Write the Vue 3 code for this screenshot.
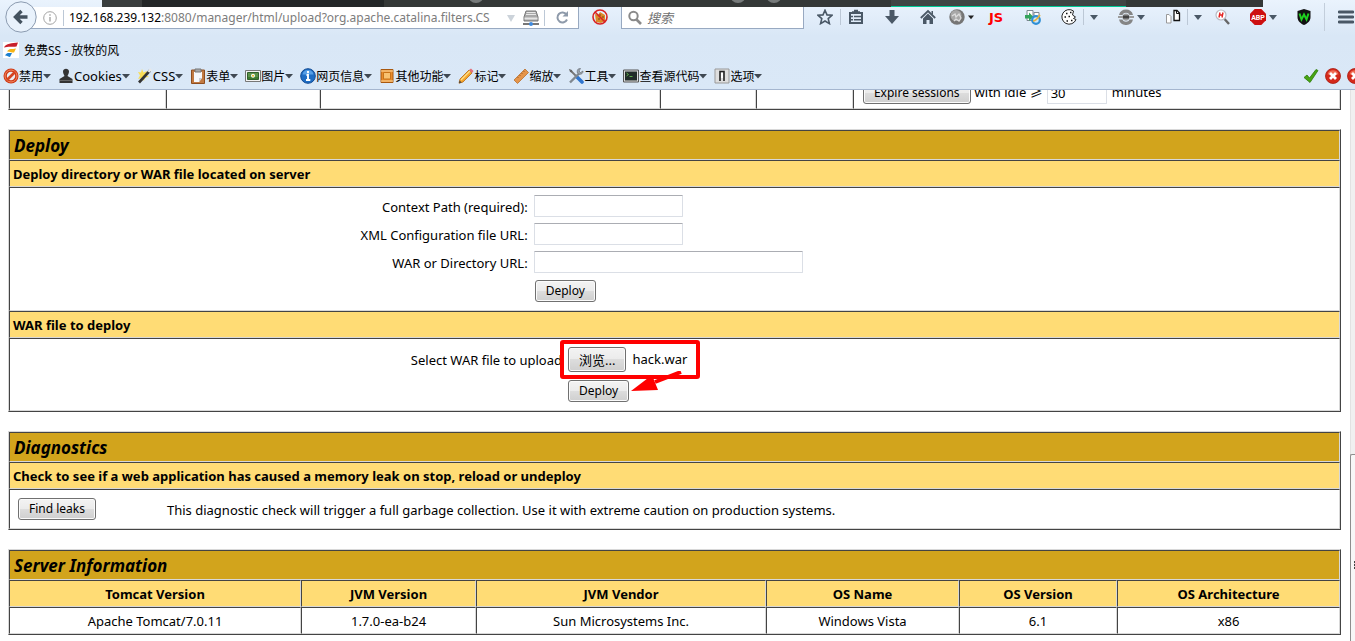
<script setup>
import { ref } from 'vue'

const contextPath = ref('')
const configUrl = ref('')
const warUrl = ref('')
const idle = ref('30')
const query = ref('')

const menus = [
  { icon: 'ban', label: '禁用' },
  { icon: 'person', label: 'Cookies', latin: true },
  { icon: 'wand', label: 'CSS', latin: true },
  { icon: 'clipboard', label: '表单' },
  { icon: 'image', label: '图片' },
  { icon: 'info', label: '网页信息' },
  { icon: 'book', label: '其他功能' },
  { icon: 'pencil', label: '标记' },
  { icon: 'ruler', label: '缩放' },
  { icon: 'tools', label: '工具' },
  { icon: 'screen', label: '查看源代码' },
  { icon: 'switch', label: '选项' },
]

const server = [
  ['Tomcat Version', 'Apache Tomcat/7.0.11'],
  ['JVM Version', '1.7.0-ea-b24'],
  ['JVM Vendor', 'Sun Microsystems Inc.'],
  ['OS Name', 'Windows Vista'],
  ['OS Version', '6.1'],
  ['OS Architecture', 'x86'],
]
</script>

<template>
  <div class="window">
    <header class="chrome">
      <div class="strip" aria-hidden="true">
        <span class="strip-edge"></span>
        <span class="strip-dots"><i></i><i></i><i></i></span>
        <span class="strip-tab"></span>
        <span class="strip-end"></span>
      </div>

      <div class="nav">
        <button class="back" type="button" aria-label="Back">
          <svg viewBox="0 0 32 32"><circle cx="16" cy="16" r="15.2" fill="#e9f2fc" stroke="#8b9bb0" /><path d="M22.500 16H11M16.500 10l-6 6 6 6" fill="none" stroke="#44525f" stroke-width="3.400" /></svg>
        </button>
        <div class="url">
          <svg class="ic" viewBox="0 0 16 16"><circle cx="8" cy="8" r="6.300" fill="none" stroke="#a3a3a3" /><path d="M8 7v4.500M8 4.200v1.500" stroke="#a3a3a3" stroke-width="1.400" /></svg>
          <span class="rule"></span>
          <span class="address"><b>192.168.239.132</b>:8080/manager/html/upload?org.apache.catalina.filters.CS</span>
          <svg class="caret" viewBox="0 0 8 8"><path d="M0 1h8L4 8z" fill="#ccd3da" /></svg>
          <svg class="ic" viewBox="0 0 16 16"><path d="M3 1h10l2 6v4H1V7z" fill="#a8a8a8" stroke="#777" /><path d="M3.500 2.500h9M3 4.500h10" stroke="#e8e8e8" /><path d="M1.500 7.500h13v2h-13z" fill="#e5e5e5" /><path d="M0 14h16" stroke="#777" stroke-width="2" /><circle cx="8" cy="14" r="2" fill="#3f8be0" /></svg>
          <span class="rule"></span>
          <svg class="ic reload" viewBox="0 0 16 16"><path d="M12.500 4.500A5 5 0 1 0 13 9.500" fill="none" stroke="#8e9aaa" stroke-width="2" /><path d="M8.500 6.500H14V1z" fill="#8e9aaa" /></svg>
        </div>
        <button class="tool fox" type="button" aria-label="Block">
          <svg viewBox="0 0 16 16"><path d="M3 5l3 1 2-3 5 3v6l-4 2-5-1z" fill="#dc8a28" /><path d="M7 6h2M10 8h2M6 10h2" stroke="#7a4516" /><circle cx="8" cy="8" r="7" fill="none" stroke="#d92323" stroke-width="1.600" /><path d="M3 3l10 10" stroke="#d92323" stroke-width="1.600" /></svg>
        </button>
        <label class="search">
          <svg class="ic" viewBox="0 0 16 16"><circle cx="6.500" cy="6" r="4.200" fill="none" stroke="#8a8a8a" stroke-width="2" /><path d="M9.500 9.500l4.500 4.500" stroke="#8a8a8a" stroke-width="2.600" /></svg>
          <input v-model="query" placeholder="搜索" aria-label="搜索" />
        </label>

        <div class="tools">
          <button class="tool" type="button" aria-label="Bookmark"><svg viewBox="0 0 16 16"><path d="M8 1.300l2 4.600 5 .4-3.800 3.300 1.200 5L8 12l-4.400 2.600 1.200-5L1 6.300l5-.4z" fill="none" stroke="#4a5866" stroke-width="1.600" /></svg></button>
          <span class="rule loose"></span>
          <button class="tool" type="button" aria-label="Library"><svg viewBox="0 0 16 16"><path d="M2 4h12v10H2z" fill="none" stroke="#4a5866" stroke-width="2" /><path d="M4 3h8M6 1.500h4M3 7.500h10M3 10.800h10" stroke="#4a5866" stroke-width="1.600" /><path d="M5.500 5v8" stroke="#dce8f5" /></svg></button>
          <button class="tool far" type="button" aria-label="Downloads"><svg viewBox="0 0 16 16"><path d="M5.500 1h5v6H15l-7 8-7-8h4.500z" fill="#4a5866" /></svg></button>
          <button class="tool far" type="button" aria-label="Home"><svg viewBox="0 0 16 16"><path d="M.8 9L8 2l7.200 7" fill="none" stroke="#4a5866" stroke-width="1.800" /><path d="M3 9.500l5-5 5 5V15H9.500v-4h-3v4H3zM11.500 2H13v4l-1.500-1.500z" fill="#4a5866" /></svg></button>
          <button class="tool mid" type="button" aria-label="Proxy"><svg viewBox="0 0 16 16"><circle cx="8" cy="8" r="7.700" fill="#757575" /><circle cx="7" cy="6.500" r="5.500" fill="#a8a8a8" /><path d="M3 7l3-2 1 3 3-3 2 4-2 3-3-2-2 2" fill="none" stroke="#ddd" stroke-width="1.300" /></svg></button>
          <svg class="caret near tiny" viewBox="0 0 8 8"><path d="M0 2h8L4 7z" fill="#222" /></svg>
          <button class="js mid" type="button">JS</button>
          <button class="tool far" type="button" aria-label="Switch browser"><svg viewBox="0 0 16 16"><path d="M2 1.500h6v10H2zM9 3.500h5v9H9z" fill="#fff" stroke="#7d8791" /><path d="M0 6h4V3.500L8.500 8 4 12V9.500H0z" fill="#34a35b" /><circle cx="11" cy="11" r="3.800" fill="#cfe6f8" stroke="#2f8fd5" stroke-width="2.200" /><path d="M8 12c2 0 5-3 7-6" stroke="#e7b13a" stroke-width="1.600" fill="none" /></svg></button>
          <button class="tool far" type="button" aria-label="Cookies"><svg viewBox="0 0 16 16"><path d="M12.500 2A7.300 7.300 0 1 0 15 10.500l-2.500-1 2-1.500-3-2z" fill="#fff" stroke="#222" /><path d="M5 4.500h1.500M9 3.500h1.500M3.500 8h1.500M7.500 7.500H9M5.500 12H7M10 11.500h1.500" stroke="#111" stroke-width="1.500" /></svg></button>
          <span class="rule"></span>
          <svg class="caret" viewBox="0 0 8 8"><path d="M0 2h8L4 7z" fill="#4a5866" /></svg>
          <button class="tool far" type="button" aria-label="Session"><svg viewBox="0 0 16 16"><path d="M1 6a7.200 7.200 0 0 1 14 0h-3.500c-1-3-6-3-7 0zM1 10.500a7.200 7.200 0 0 0 14 0h-3.500c-1 3-6 3-7 0z" fill="#858585" /><path d="M0 7h4.500c1-3.500 6-3.500 7 0H16v2h-4.500c-1 3.500-6 3.500-7 0H0z" fill="#9c9c9c" /><path d="M5 8h6" stroke="#444" stroke-width="3" /></svg></button>
          <svg class="caret near" viewBox="0 0 8 8"><path d="M0 2h8L4 7z" fill="#4a5866" /></svg>
          <button class="tool far" type="button" aria-label="Tiles"><svg viewBox="0 0 16 16"><path d="M1.500 5.500h2.500l2 2v6.500H1.500z" fill="#fff" stroke="#999" /><path d="M9 1.500h3L14.500 4v7.500H9z" fill="#fff" stroke="#111" stroke-width="1.300" /><path d="M11.500 1.500v3h3" fill="none" stroke="#111" /></svg></button>
          <span class="rule"></span>
          <svg class="caret" viewBox="0 0 8 8"><path d="M0 2h8L4 7z" fill="#4a5866" /></svg>
          <button class="tool mid" type="button" aria-label="Inspect"><svg viewBox="0 0 16 16"><path d="M9.500 10l4.500 5" stroke="#666" stroke-width="2.400" /><circle cx="6" cy="6" r="5" fill="#fff" stroke="#b9b9c2" stroke-width="1.200" /><path d="M5 3.500L4 8.500M8 3.500l-1 5M4.500 6h3" stroke="#e32222" stroke-width="1.400" /></svg></button>
          <button class="tool wide-gap" type="button" aria-label="Adblock"><svg viewBox="0 0 16 16"><path d="M4.700 0h6.600L16 4.700v6.600L11.300 16H4.700L0 11.300V4.700z" fill="#cd1010" /><text x="8" y="10.800" text-anchor="middle" class="abp">ABP</text></svg></button>
          <svg class="caret near" viewBox="0 0 8 8"><path d="M0 2h8L4 7z" fill="#4a5866" /></svg>
          <button class="tool wide-gap" type="button" aria-label="Wappalyzer"><svg viewBox="0 0 16 16"><path d="M8 0l6.500 2v6c0 4-3 6.500-6.500 8-3.500-1.500-6.500-4-6.500-8V2z" fill="#111" /><path d="M3.500 4.500l2 6L8 5.500l2.500 5 2-6" fill="none" stroke="#1fd01f" stroke-width="2" /></svg></button>
          <span class="rule tall"></span>
          <button class="tool" type="button" aria-label="Menu"><svg viewBox="0 0 16 16"><path d="M1 3h14M1 8h14M1 13h14" stroke="#4a5866" stroke-width="2.800" stroke-linecap="round" /></svg></button>
        </div>
      </div>

      <div class="bookmarks">
        <a href="#"><svg class="ic" viewBox="0 0 16 16"><path d="M0 0h16v16H0z" fill="#fff" /><path d="M1 5.500C3 1 9 1.500 15 0.500l-1.500 4C9 5 5 4 1 5.500z" fill="#c8202c" /><path d="M4 9.500C6 6 9 7.500 13 6.500l-2 4C9 11 6 9 4 9.500z" fill="#f5b417" /><path d="M2 13.500C4 10 6 11.500 9 11l-2 4C5.500 15 3.500 13 2 13.500z" fill="#1c7fd0" /></svg>免费SS - 放牧的风</a>
      </div>

      <div class="devbar">
        <button v-for="m in menus" :key="m.label" class="menu" :class="{ latin: m.latin }" type="button">
          <svg class="ic" viewBox="0 0 16 16">
            <g v-if="m.icon === 'ban'"><circle cx="8" cy="8" r="7.500" fill="#cf3a17" /><circle cx="8" cy="8" r="6" fill="none" stroke="#f28a63" /><circle cx="8" cy="8" r="4.200" fill="#e9edf2" /><path d="M4 12l8-8" stroke="#d64420" stroke-width="2.600" /></g>
            <g v-else-if="m.icon === 'person'"><path d="M5 3.500C5-.3 11-.3 11 3.500c0 2-1 3-1.500 4.500L14.500 11v4h-13v-4L6.500 8C6 6.500 5 5.500 5 3.500z" fill="#343434" /><path d="M2 12.500h12" stroke="#666" /></g>
            <g v-else-if="m.icon === 'wand'"><path d="M5 1l1.500 3.500L10 3 8.500 6.500 12 9l-4 .5L7 13 5 10l-4 1 2-3.500L1 4l3 .5z" fill="#f8dd58" /><path d="M2 14.500L13 2.500" stroke="#333" stroke-width="2.600" /><path d="M11.500 4L14 1.200" stroke="#e8e8e8" stroke-width="2.600" /></g>
            <g v-else-if="m.icon === 'clipboard'"><path d="M1.500 2h13v13.500h-13z" fill="#c27a42" stroke="#8e4e20" /><path d="M4 4h8v6l-3 4H4z" fill="#f6f8fb" /><path d="M12 10H9v4z" fill="#c8cdd4" /><path d="M5 1h6v3H5z" fill="#aaa" stroke="#777" /></g>
            <g v-else-if="m.icon === 'image'"><path d="M.5 2.500h15v11H.5z" fill="#f3f3f3" stroke="#777" /><path d="M2.500 4.500h11v7h-11z" fill="#5c9148" stroke="#315f2a" /><path d="M3 9h10v2H3z" fill="#3c7a2c" /><circle cx="8" cy="7.800" r="2" fill="#fff" /><circle cx="8" cy="7.800" r="1" fill="#e8b616" /></g>
            <g v-else-if="m.icon === 'info'"><circle cx="8" cy="8" r="7.300" fill="#1f6dc4" stroke="#124b94" /><path d="M2.500 6.500a5.600 5.600 0 0 1 11 0z" fill="#579fe6" /><path d="M8 3v2.200M6.500 7H8v5M6 12h4.300" stroke="#fff" stroke-width="1.900" fill="none" /></g>
            <g v-else-if="m.icon === 'book'"><path d="M2 1.500h12v13H2z" fill="#e88b2b" stroke="#a8580f" /><path d="M4.500 4.500h7v6.500h-7z" fill="#f8c170" stroke="#c87318" /><path d="M2 13h12M2 3h12" stroke="#fbd9a0" /></g>
            <g v-else-if="m.icon === 'pencil'"><path d="M2 11L11 2l3 3-9 9-4 1.200z" fill="#f5a52b" stroke="#b86a14" stroke-width=".8" /><path d="M3 12l9-9" stroke="#fde08c" stroke-width="1.300" /><path d="M11 2l2-1.500 2.500 2.500L14 5z" fill="#e2707c" /><path d="M1 15.200l.6-2.700 2 2z" fill="#444" /></g>
            <g v-else-if="m.icon === 'ruler'"><path d="M1 12L12 1l3.500 3.500-11 11z" fill="#e5954a" stroke="#b8702f" stroke-width=".8" /><path d="M4.500 9l1 1M6.500 7l1 1M8.500 5l1 1M10.500 3l1 1" stroke="#94501a" stroke-width=".8" /></g>
            <g v-else-if="m.icon === 'tools'"><path d="M3 3l7 7" stroke="#777" stroke-width="1.800" /><path d="M9 9l5 5" stroke="#2f75ce" stroke-width="3.600" stroke-linecap="round" /><path d="M2 14.500L11.500 5" stroke="#808890" stroke-width="2.400" /><path d="M15 3l-2.500 1.500L11 3l1.500-2.500C10 0 8.500 2.500 9.500 5c2 2.500 6 1 5.500-2z" fill="#9aa2aa" stroke="#5f666d" stroke-width=".6" /><path d="M1 1l3 1 .5 2.500L2 4z" fill="#666" /></g>
            <g v-else-if="m.icon === 'screen'"><path d="M.5 2h15v12H.5z" fill="#ddd" stroke="#555" /><path d="M2 3.500h12v9H2z" fill="#222c28" /><path d="M3.500 5l2 1.500-2 1.500M6.500 8.500h3" fill="none" stroke="#5fae4a" /></g>
            <g v-else><path d="M1 1h14v14H1z" fill="#dedede" stroke="#999" /><path d="M6 13V3.500h4V13" fill="none" stroke="#222" stroke-width="1.600" /><path d="M7 5h2v5H7z" fill="#fff" /></g>
          </svg>
          <span>{{ m.label }}</span>
          <svg class="caret" viewBox="0 0 8 8"><path d="M0 2h8L4 6.500z" fill="#3f4852" /></svg>
        </button>
        <div class="status">
          <svg class="ic" viewBox="0 0 16 16"><path d="M1 9.500L4 7l2.500 3L13 1.500l2 1-8 12z" fill="#48a512" stroke="#2c7a08" stroke-width=".8" /></svg>
          <svg v-for="n in 2" :key="n" class="ic" viewBox="0 0 16 16"><circle cx="8" cy="8" r="7.500" fill="#d4291b" stroke="#a91a10" stroke-width=".8" /><path d="M2.500 6.500a5.700 5.700 0 0 1 11 0z" fill="#ef6d55" /><path d="M5 5l6 6M11 5l-6 6" stroke="#fff" stroke-width="2.800" /></svg>
        </div>
      </div>
    </header>

    <div class="view">
      <main class="page">
        <div class="clipped">
          <table class="grid sessions">
            <colgroup><col class="s1" /><col class="s2" /><col class="s3" /><col class="s4" /><col class="s5" /><col /></colgroup>
            <tbody><tr>
              <td></td><td></td><td></td><td></td><td></td>
              <td>
                <div class="expire">
                  <button class="btn" type="button">Expire sessions</button>
                  <label for="idle">with idle ≥</label>
                  <input id="idle" v-model="idle" class="field idle" />
                  <span>minutes</span>
                </div>
              </td>
            </tr></tbody>
          </table>
        </div>

        <table class="grid">
          <tbody>
            <tr><th class="title">Deploy</th></tr>
            <tr><th class="sub">Deploy directory or WAR file located on server</th></tr>
            <tr><td>
              <form class="form path" @submit.prevent>
                <label for="ctx">Context Path (required):</label>
                <input id="ctx" v-model="contextPath" class="field" />
                <label for="cfg">XML Configuration file URL:</label>
                <input id="cfg" v-model="configUrl" class="field" />
                <label for="war">WAR or Directory URL:</label>
                <input id="war" v-model="warUrl" class="field wide" />
                <button class="btn second" type="submit">Deploy</button>
              </form>
            </td></tr>
            <tr><th class="sub">WAR file to deploy</th></tr>
            <tr><td>
              <form class="form upload" @submit.prevent>
                <label for="browse">Select WAR file to upload</label>
                <div class="picker">
                  <button id="browse" class="btn browse" type="button">浏览...</button>
                  <span>hack.war</span>
                  <span class="mark"></span>
                  <svg class="arrow" viewBox="0 0 52 22"><path d="M50 1L24 11" fill="none" stroke="#f00" stroke-width="4" /><path d="M0 20L21 4l6 15z" fill="#f00" /></svg>
                </div>
                <button class="btn second" type="submit">Deploy</button>
              </form>
            </td></tr>
          </tbody>
        </table>

        <table class="grid">
          <tbody>
            <tr><th class="title">Diagnostics</th></tr>
            <tr><th class="sub">Check to see if a web application has caused a memory leak on stop, reload or undeploy</th></tr>
            <tr><td>
              <div class="diag">
                <div><button class="btn" type="button">Find leaks</button></div>
                <span>This diagnostic check will trigger a full garbage collection. Use it with extreme caution on production systems.</span>
              </div>
            </td></tr>
          </tbody>
        </table>

        <table class="grid info">
          <colgroup><col class="c1" /><col class="c2" /><col class="c3" /><col class="c4" /><col class="c5" /><col /></colgroup>
          <thead>
            <tr><th class="title" colspan="6">Server Information</th></tr>
            <tr><th v-for="s in server" :key="s[0]" class="sub">{{ s[0] }}</th></tr>
          </thead>
          <tbody>
            <tr><td v-for="s in server" :key="s[0]">{{ s[1] }}</td></tr>
          </tbody>
        </table>
      </main>
      <div class="scroll"><div class="thumb"><i></i></div></div>
    </div>
  </div>
</template>

<style>
body { margin: 0; background: #fff; }
</style>

<style scoped>
.window { display: flex; flex-direction: column; height: 100vh; overflow: hidden; font-family: "Noto Sans", "Noto Sans CJK SC", sans-serif; font-size: 13px; color: #000; }
.window * { box-sizing: border-box; }
button { padding: 0; border: 0; background: none; font: inherit; color: inherit; }
svg { display: block; flex: none; }
.ic { width: 16px; height: 16px; }
.caret { width: 8px; height: 8px; }

.chrome { position: relative; flex: none; height: 90px; border-bottom: 1px solid #a5b6cf; background: linear-gradient(#eaf3fd 0, #d9e7f6 36px, #dae8f7 100%); font-size: 12px; }
.strip { position: absolute; top: 0; left: 102px; right: 92px; height: 7px; display: flex; background: linear-gradient(90deg, #3a3e3e 40px, #232728 40px, #232728 282px, #343837 282px); overflow: hidden; }
.strip-edge { flex: 1; }
.strip-dots { display: flex; gap: 20px; margin-right: 109px; }
.strip-dots i { width: 16px; height: 16px; margin-top: -13px; border-radius: 8px; background: #777b7b; }
.strip-dots i:first-child { margin-right: 226px; }
.strip-tab { width: 235px; border-bottom: 1px solid #00c896; background: #3f4444; }
.strip-end { width: 137px; }

.nav { display: flex; align-items: flex-start; height: 36px; padding-right: 1px; }
.back { position: relative; z-index: 1; width: 32px; height: 32px; margin: 1px -10px 0 5px; }
.url { flex: 1; min-width: 0; display: flex; align-items: center; gap: 5px; height: 22px; margin-top: 7px; padding-left: 14px; padding-right: 8px; border: 1px solid #98a9c1; border-top: 0; background: #fff; color: #7c7c7c; }
.address { flex: 1; min-width: 0; overflow: hidden; white-space: nowrap; line-height: 20px; }
.address b { font-weight: 400; color: #000; }
.url .caret { margin-right: 3px; }
.reload { margin-left: 4px; }
.rule { width: 1px; height: 16px; margin: 0 6px; background: #bcc8d6; }
.rule.loose { margin: 0 7px; }
.url .rule { margin: 0; }
.rule.tall { height: 28px; margin: 0 13px 0 12px; background: #c3cedb; }
.tool { display: block; width: 16px; height: 16px; }
.tool svg { width: 16px; height: 16px; }
.fox { margin: 9px 13px 0; }
.search { flex: none; display: flex; align-items: center; gap: 4px; width: 183px; height: 22px; margin-top: 7px; padding-left: 5px; border: 1px solid #98a9c1; border-top: 0; background: #fff; }
.search input { width: 140px; height: 20px; padding: 0; border: 0; outline: 0; background: none; font: italic 13px "Noto Sans", "Noto Sans CJK SC", sans-serif; }
.search input::placeholder { color: #707070; }
.tools { flex: none; display: flex; align-items: center; height: 16px; margin: 9px 0 0 13px; }
.near { margin-left: 3px; }
.mid { margin-left: 13px; }
.far { margin-left: 20px; }
.wide-gap { margin-left: 19px; }
.tiny { width: 6px; }
.js { width: 18px; color: #f00; font: 700 13px "DejaVu Sans", sans-serif; }
.abp { fill: #fff; font: 700 7px Roboto, sans-serif; }

.bookmarks { display: flex; align-items: center; height: 28px; padding-left: 3px; }
.bookmarks a { display: flex; align-items: center; gap: 5px; color: #000; text-decoration: none; }
.devbar { display: flex; align-items: center; gap: 7px; height: 24px; padding-left: 3px; overflow: hidden; }
.menu { flex: none; display: flex; align-items: center; white-space: nowrap; }
.latin { font-size: 13px; }
.status { flex: none; display: flex; gap: 6px; margin-left: auto; margin-right: -8px; }

.view { flex: 1; min-height: 0; display: flex; overflow: hidden; }
.page { flex: 1; min-width: 0; display: flex; flex-direction: column; gap: 19px; padding: 0 9px 0 8px; }
.scroll { flex: none; width: 5px; padding-top: 364px; border-left: 1px solid #e2e2e2; background: #f0f0f0; }
.thumb { display: flex; justify-content: flex-end; height: 190px; margin-left: -1px; padding-top: 106px; border: 1px solid #8d8d8d; border-right: 0; border-radius: 2px 0 0 2px; background: #f7f7f7; }
.thumb i { width: 1px; height: 8px; background: repeating-linear-gradient(#444 0, #444 2px, #ddd 2px, #ddd 3px); }

.grid { width: 100%; border-spacing: 0; border: 1px solid; border-color: #d8d8d8 #444 #444 #d8d8d8; table-layout: fixed; }
.grid th, .grid td { padding: 3px; border: 1px solid; border-color: #444 #d8d8d8 #d8d8d8 #444; line-height: 19px; }
.grid .title { height: 30px; padding: 0 4px; background: #d2a41c; text-align: left; font-size: 17px; font-style: italic; }
.grid .sub { height: 27px; padding: 4px 3px 2px; background: #ffdc75; text-align: left; }
.info .sub, .info td { height: 27px; text-align: center; }
.grid.info td { padding: 4px 3px 2px; }
.grid.info .sub { text-align: center; }
.clipped { flex: none; display: flex; align-items: flex-end; height: 20px; overflow: hidden; }
.sessions .s1 { width: 11.8%; }
.sessions .s2 { width: 11.57%; }
.sessions .s3 { width: 25.54%; }
.sessions .s4 { width: 7.21%; }
.sessions .s5 { width: 7.29%; }
.sessions td { height: 33px; }
.expire { display: flex; align-items: center; gap: 4px; padding: 0 6px; }
.expire .field { margin-right: 1px; }
.info .c1 { width: 21.94%; }
.info .c2 { width: 13.15%; }
.info .c3 { width: 21.79%; }
.info .c4 { width: 14.5%; }
.info .c5 { width: 11.87%; }

.btn { height: 22px; padding: 0 10px; border: 1px solid #707070; border-radius: 3px; background: linear-gradient(#f3f3f3 0, #ebebeb 50%, #dddddd 50%, #cfcfcf 100%); box-shadow: inset 0 0 0 1px #fbfbfb; font-size: 12px; line-height: 18px; white-space: nowrap; }
.field { width: 149px; height: 22px; padding: 1px 3px; border: 1px solid #dbdfe6; border-top-color: #abadb3; border-radius: 1px; outline: 0; background: #fff; font: 13px "Noto Sans", sans-serif; }
.wide { width: 269px; }
.idle { width: 60px; }
.form { display: grid; column-gap: 6px; align-items: center; justify-items: start; }
.form label { justify-self: end; padding-top: 2px; }
.path { grid-template-columns: 38.9% 1fr; row-gap: 6px; padding: 4px 0; }
.upload { grid-template-columns: 41.5% 1fr; row-gap: 8px; padding: 5px 0; }
.second { grid-column: 2; }
.path .second { margin: 1px; }
.picker { position: relative; display: flex; align-items: center; gap: 6px; }
.browse { height: 25px; font-size: 13px; }
.mark { position: absolute; left: -8px; top: -7px; width: 140px; height: 39px; border: 4px solid #f00; border-radius: 3px; }
.arrow { position: absolute; left: 63px; top: 24px; width: 52px; height: 22px; }
.diag { display: grid; grid-template-columns: 154px 1fr; align-items: center; padding: 5px 0; }
.diag div { display: flex; padding-left: 5px; }
.diag span { padding-top: 2px; }
</style>
